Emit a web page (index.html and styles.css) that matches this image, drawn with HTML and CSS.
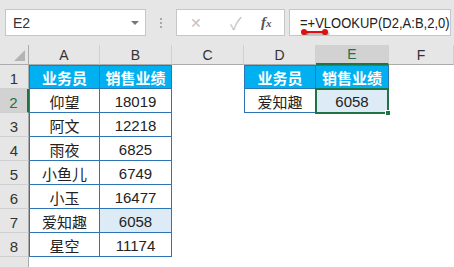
FILE: index.html
```html
<!DOCTYPE html>
<html lang="zh-CN">
<head>
  <meta charset="UTF-8" />
  <title>VLOOKUP</title>
  <link rel="stylesheet" href="styles.css">
</head>
<body>
  <div class="toolbar">
    <div class="namebox">
      <span>E2</span>
      <span class="arrow"></span>
    </div>
    <div class="dots"><i></i><i></i><i></i></div>
    <div class="buttons">
      <span class="btn x">✕</span>
      <span class="btn ok">✓</span>
      <span class="btn fx"><i>f</i><i class="small">x</i></span>
    </div>
    <div class="formula">
      <span class="ftext">=+VLOOKUP(D2,A:B,2,0)</span>
      <span class="mark"></span>
    </div>
  </div>

  <div class="sheet">
    <div class="ch corner"><span class="tri"></span></div>
    <div class="ch">A</div>
    <div class="ch">B</div>
    <div class="ch">C</div>
    <div class="ch">D</div>
    <div class="ch sel">E</div>
    <div class="ch">F</div>

    <div class="rh">1</div>
    <div class="c t hd first top">业务员</div>
    <div class="c t hd top">销售业绩</div>
    <div class="c"></div>
    <div class="c t hd first top">业务员</div>
    <div class="c t hd top">销售业绩</div>
    <div class="c"></div>

    <div class="rh sel">2</div>
    <div class="c t first">仰望</div>
    <div class="c t">18019</div>
    <div class="c"></div>
    <div class="c t first">爱知趣</div>
    <div class="c t active">6058<span class="handle"></span></div>
    <div class="c"></div>

    <div class="rh">3</div>
    <div class="c t first">阿文</div>
    <div class="c t">12218</div>
    <div class="c"></div><div class="c"></div><div class="c"></div><div class="c"></div>

    <div class="rh">4</div>
    <div class="c t first">雨夜</div>
    <div class="c t">6825</div>
    <div class="c"></div><div class="c"></div><div class="c"></div><div class="c"></div>

    <div class="rh">5</div>
    <div class="c t first">小鱼儿</div>
    <div class="c t">6749</div>
    <div class="c"></div><div class="c"></div><div class="c"></div><div class="c"></div>

    <div class="rh">6</div>
    <div class="c t first">小玉</div>
    <div class="c t">16477</div>
    <div class="c"></div><div class="c"></div><div class="c"></div><div class="c"></div>

    <div class="rh">7</div>
    <div class="c t first">爱知趣</div>
    <div class="c t hit">6058</div>
    <div class="c"></div><div class="c"></div><div class="c"></div><div class="c"></div>

    <div class="rh">8</div>
    <div class="c t first">星空</div>
    <div class="c t">11174</div>
    <div class="c"></div><div class="c"></div><div class="c"></div><div class="c"></div>

    <div class="rh"></div>
  </div>
</body>
</html>
```

FILE: styles.css
```css
* {
  box-sizing: border-box;
}
body {
  margin: 0;
  width: 454px;
  height: 267px;
  overflow: hidden;
  background: #fff;
  font-family: "Liberation Sans", "Noto Sans CJK SC", sans-serif;
  color: #222;
}
.toolbar {
  height: 45px;
  background: #e6e6e6;
  display: flex;
  align-items: flex-start;
  padding: 9px 0 0 5px;
}
.namebox {
  width: 141px;
  height: 27px;
  background: #fff;
  border: 1px solid #c6c6c6;
  display: flex;
  align-items: center;
  justify-content: space-between;
  padding: 0 6px 0 7px;
  font-size: 14px;
  color: #333;
}
.arrow {
  width: 0;
  height: 0;
  border-left: 4px solid transparent;
  border-right: 4px solid transparent;
  border-top: 4px solid #777;
}
.dots {
  width: 30px;
  height: 27px;
  display: flex;
  flex-direction: column;
  align-items: center;
  justify-content: center;
  gap: 2px;
}
.dots i {
  width: 2px;
  height: 2px;
  background: #a8a8a8;
}
.buttons {
  width: 109px;
  height: 27px;
  background: #fff;
  border: 1px solid #c6c6c6;
  display: flex;
  align-items: center;
  padding-left: 13px;
}
.btn {
  color: #c2c2c2;
  font-size: 15px;
}
.x {
  width: 40px;
  font-size: 14px;
}
.ok {
  width: 31px;
  font-size: 17px;
}
.fx {
  color: #555;
  font-family: "Liberation Serif", serif;
  font-size: 15px;
  font-weight: bold;
}
.fx .small {
  font-size: 11px;
}
.formula {
  position: relative;
  width: 162px;
  height: 27px;
  margin-left: 4px;
  background: #fff;
  border: 1px solid #c6c6c6;
  display: flex;
  align-items: center;
  padding-left: 10px;
  font-size: 13px;
  color: #222;
  white-space: nowrap;
  overflow: hidden;
}
.ftext {
  display: inline-block;
  transform: scaleY(1.15);
}
.mark {
  position: absolute;
  left: 14px;
  top: 21px;
  width: 21px;
  height: 2px;
  background: #e01010;
  box-shadow: 1px 2px 2px rgba(0,0,0,0.35);
}
.mark::before,
.mark::after {
  content: "";
  position: absolute;
  top: -2px;
  width: 6px;
  height: 6px;
  border-radius: 50%;
  background: #e01010;
  box-shadow: 1px 2px 2px rgba(0,0,0,0.35);
}
.mark::before {
  left: -3px;
}
.mark::after {
  right: -3px;
}

.sheet {
  display: grid;
  grid-template-columns: 29px 71px 72px 72px 72px 73px 65px;
  grid-template-rows: 20px 24px repeat(7, 24px) 20px;
}
.ch {
  background: #e6e6e6;
  border-right: 1px solid #d0d0d0;
  border-bottom: 1px solid #ababab;
  display: flex;
  align-items: center;
  justify-content: center;
  font-size: 14px;
  color: #333;
}
.ch.sel {
  background: #d2d2d2;
  color: #217346;
  border-bottom: 2px solid #217346;
}
.corner {
  position: relative;
  border-right: 1px solid #ababab;
}
.tri {
  position: absolute;
  right: 3px;
  bottom: 3px;
  width: 0;
  height: 0;
  border-left: 11px solid transparent;
  border-bottom: 11px solid #b4b4b4;
}
.rh {
  background: #e6e6e6;
  border-right: 1px solid #ababab;
  border-bottom: 1px solid #d0d0d0;
  display: flex;
  align-items: flex-end;
  justify-content: center;
  padding-bottom: 1px;
  font-size: 15px;
  color: #333;
}
.rh.sel {
  background: #d2d2d2;
  color: #217346;
  border-right: 2px solid #217346;
}
.c {
  display: flex;
  align-items: center;
  justify-content: center;
  font-size: 15px;
  padding-top: 1px;
}
.t {
  border-right: 1px solid #2e75b6;
  border-bottom: 1px solid #2e75b6;
}
.first {
  border-left: 1px solid #2e75b6;
}
.top {
  border-top: 1px solid #2e75b6;
}
.hd {
  background: #00b0f0;
  color: #fff;
  font-weight: bold;
}
.hit {
  background: #ddebf7;
}
.active {
  position: relative;
  background: #ddebf7;
  border: 2px solid #217346;
  margin: -1px 0 -1px -1px;
}
.handle {
  position: absolute;
  right: -4px;
  bottom: -4px;
  width: 6px;
  height: 6px;
  background: #217346;
  border: 1px solid #fff;
}
```
